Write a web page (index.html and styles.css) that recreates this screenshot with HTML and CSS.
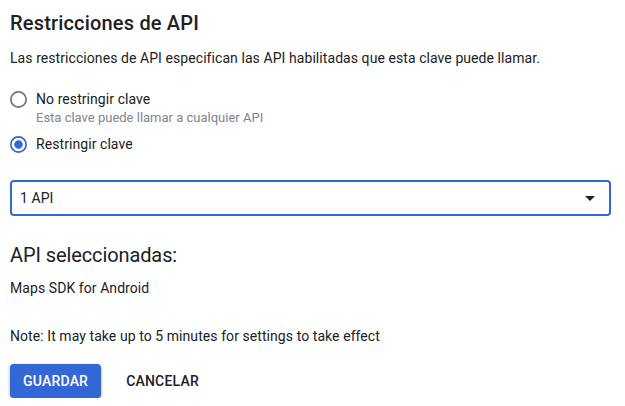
FILE: index.html
```html
<!DOCTYPE html>
<html lang="es">
<head>
<meta charset="utf-8">
<title>Restricciones de API</title>
<link rel="stylesheet" href="styles.css">
</head>
<body>
<main class="panel">
  <h2 class="title">Restricciones de API</h2>
  <p class="desc">Las restricciones de API especifican las API habilitadas que esta clave puede llamar.</p>

  <div class="radios">
    <label class="radio">
      <svg class="radio-icon" viewBox="2 2 20 20" width="17" height="17" aria-hidden="true">
        <circle cx="12" cy="12" r="9" fill="none" stroke="#757575" stroke-width="2"/>
      </svg>
      <span class="radio-label">No restringir clave</span>
    </label>
    <div class="radio-hint">Esta clave puede llamar a cualquier API</div>

    <label class="radio radio-second">
      <svg class="radio-icon" viewBox="2 2 20 20" width="17" height="17" aria-hidden="true">
        <circle cx="12" cy="12" r="9" fill="none" stroke="#3367d6" stroke-width="2"/>
        <circle cx="12" cy="12" r="5" fill="#3367d6"/>
      </svg>
      <span class="radio-label">Restringir clave</span>
    </label>
  </div>

  <div class="select">
    <span class="select-value">1 API</span>
    <svg class="select-arrow" viewBox="0 0 24 24" width="24" height="24" aria-hidden="true">
      <path d="M7 10l5 5 5-5z" fill="#202124"/>
    </svg>
  </div>

  <h3 class="subtitle">API seleccionadas:</h3>
  <p class="api-item">Maps SDK for Android</p>

  <p class="note">Note: It may take up to 5 minutes for settings to take effect</p>

  <div class="actions">
    <button class="btn btn-primary" type="button">GUARDAR</button>
    <button class="btn btn-text" type="button">CANCELAR</button>
  </div>
</main>
</body>
</html>
```

FILE: styles.css
```css
* {
  box-sizing: border-box;
}

html, body {
  margin: 0;
  background: #ffffff;
}

body {
  font-family: Roboto, "Liberation Sans", Arial, sans-serif;
  color: #202124;
  font-size: 14px;
  line-height: 20px;
  letter-spacing: 0.07px;
}

.panel {
  padding: 11px 14px 0 10px;
}

.title {
  margin: 0;
  font-size: 20px;
  line-height: 24px;
  font-weight: 500;
  letter-spacing: 0.18px;
}

.desc {
  margin: 13px 0 0;
}

.radios {
  margin-top: 21px;
}

.radio {
  display: flex;
  align-items: center;
  gap: 9px;
  height: 20px;
}

.radio-icon {
  flex: none;
  display: block;
}

.radio-hint {
  margin: 1px 0 0 26px;
  font-size: 13px;
  line-height: 16px;
  letter-spacing: 0;
  color: #80868b;
}

.radio-second {
  margin-top: 8px;
}

.select {
  margin-top: 26px;
  height: 36px;
  border: 2px solid #3367d6;
  border-radius: 4px;
  display: flex;
  align-items: center;
  justify-content: space-between;
  padding: 0 7px 0 8px;
}

.select-value {
  line-height: 20px;
}

.select-arrow {
  display: block;
}

.subtitle {
  margin: 27px 0 0;
  font-size: 20px;
  line-height: 24px;
  font-weight: 400;
  letter-spacing: -0.1px;
}

.api-item {
  margin: 11px 0 0;
}

.note {
  margin: 28px 0 0;
}

.actions {
  margin-top: 18px;
  display: flex;
  align-items: center;
  gap: 12px;
}

.btn {
  font-family: Roboto, "Liberation Sans", Arial, sans-serif;
  font-size: 14px;
  font-weight: 500;
  letter-spacing: 0.2px;
  height: 34px;
  border: none;
  border-radius: 4px;
  padding: 0 13px;
  background: transparent;
  cursor: pointer;
}

.btn-primary {
  background: #3367d6;
  color: #ffffff;
  box-shadow: 0 1px 2px rgba(60, 64, 67, 0.3), 0 1px 3px 1px rgba(60, 64, 67, 0.15);
}

.btn-text {
  color: #202124;
}
```
